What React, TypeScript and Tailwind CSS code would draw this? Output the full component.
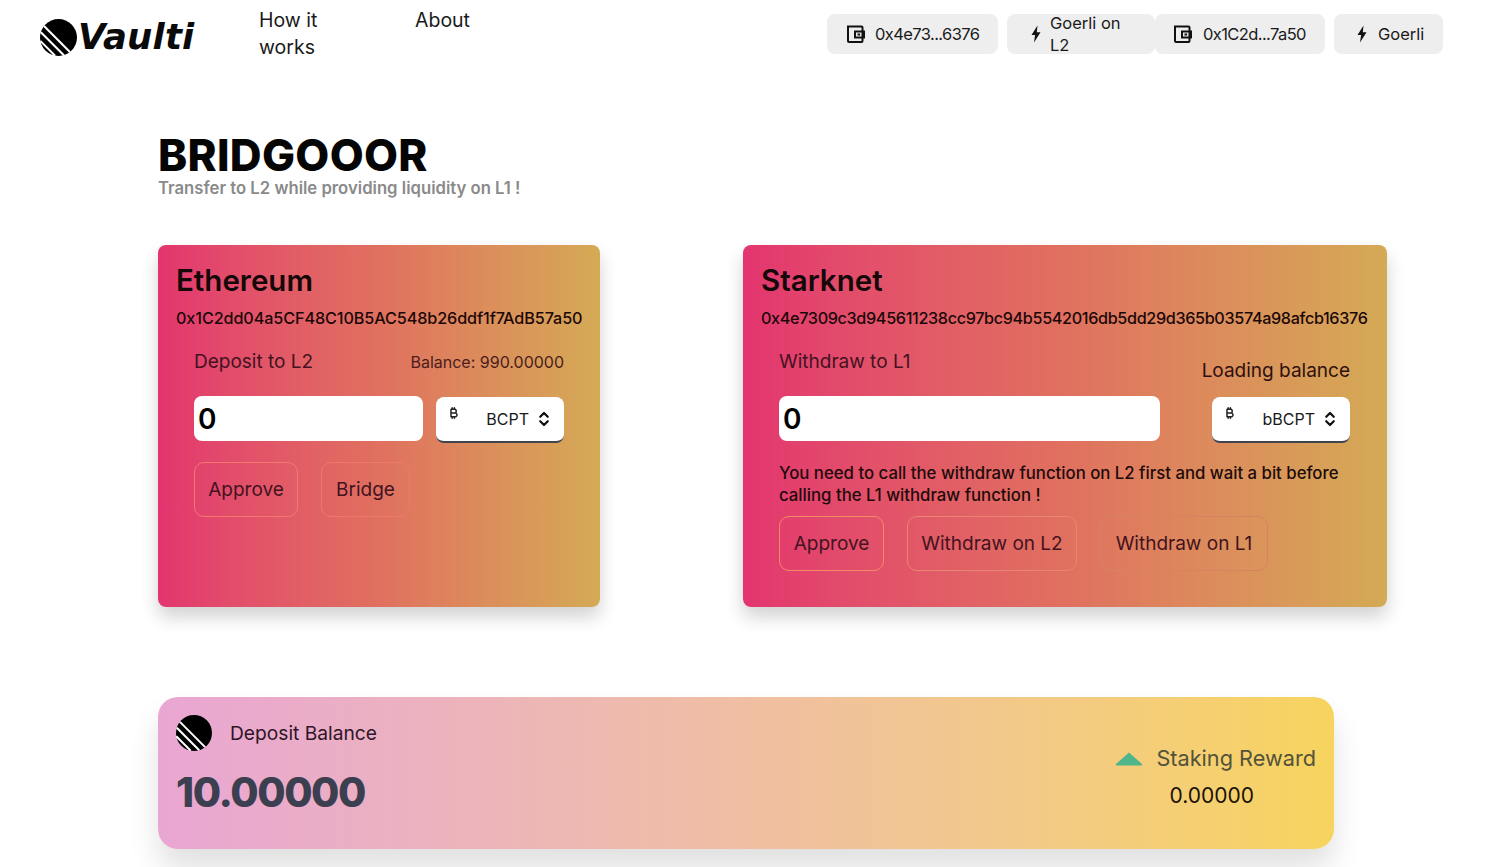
import React from 'react';
import { ChevronsUpDown } from 'lucide-react';
import { FaBitcoinSign } from 'react-icons/fa6';

const LogoMark = ({ size }: { size: number }) => (
  <svg width={size} height={size} viewBox="0 0 36 36" className="shrink-0">
    <circle cx="18" cy="18" r="18" fill="#000" />
    <g stroke="#fff" strokeWidth="2" fill="none">
      <line x1="3.9" y1="6.9" x2="29.1" y2="32.1" />
      <line x1="0.8" y1="12.8" x2="23.2" y2="35.2" />
      <line x1="0.3" y1="21.3" x2="14.7" y2="35.7" />
    </g>
  </svg>
);

const WalletIcon = () => (
  <svg width="20" height="20" viewBox="0 0 20 20" fill="none" stroke="#111" strokeWidth="2" className="shrink-0">
    <path d="M2 2.5h13.5a1 1 0 0 1 1 1V17a1 1 0 0 1-1 1H3a1 1 0 0 1-1-1V2.5z" />
    <path d="M9 7.5h9v6H9z" />
    <rect x="11.5" y="9.5" width="2.6" height="2" fill="#111" stroke="none" />
  </svg>
);

const BoltIcon = () => (
  <svg width="12" height="18" viewBox="0 0 12 18" fill="#111" className="shrink-0">
    <path d="M7.5 0.5 1.5 10h3.6L4 17.5 10.5 7.2H6.8L7.5 0.5z" />
  </svg>
);

const PillButton = ({ className, children }: { className: string; children: React.ReactNode }) => (
  <div className={`flex h-10 items-center rounded-lg bg-[#eeeeee] text-[16.5px] leading-[22px] text-[#1a1a1a] ${className}`}>
    {children}
  </div>
);

const TokenSelect = ({ label, className }: { label: string; className: string }) => (
  <div className={`relative flex h-[46px] shrink-0 items-center justify-end rounded-lg border-b-2 border-[#3f4450] bg-white pr-[11px] text-[16px] text-[#1a1a1a] ${className}`}>
    <FaBitcoinSign className="absolute left-[12px] top-[10px] text-[12px] text-[#222]" />
    <span>{label}</span>
    <ChevronsUpDown className="ml-[6px] text-[#111]" size={18} strokeWidth={3} />
  </div>
);

const ActionButton = ({ className, children }: { className: string; children: React.ReactNode }) => (
  <button className={`flex h-[55px] items-center justify-center rounded-[10px] border pt-[2px] text-[19px] text-[#43131f] ${className}`}>
    {children}
  </button>
);

export default function App() {
  return (
    <div className="h-[867px] overflow-hidden bg-white font-['Inter',sans-serif] text-black">
      {/* ヘッダー */}
      <header className="flex h-[68px] items-start">
        <div className="ml-10 mt-4 flex w-[219px] items-center">
          <LogoMark size={37} />
          <span className="ml-[1px] font-['DejaVu_Sans',sans-serif] text-[35.5px] font-bold italic leading-[42px] tracking-[0.2px] text-[#0a0a0a]">Vaulti</span>
        </div>
        <nav className="mt-[7px] flex text-[19.5px] leading-[27px] text-[#1a1a1a]">
          <a className="w-[156px] pr-[50px]">How it works</a>
          <a>About</a>
        </nav>
        <div className="ml-auto mr-[57px] mt-[14px] flex">
          <PillButton className="mr-[9px] w-[171px] pl-[19px]">
            <WalletIcon />
            <span className="ml-[9px] tracking-[-0.6px]">0x4e73...6376</span>
          </PillButton>
          <PillButton className="w-[148px] pl-[23px]">
            <BoltIcon />
            <span className="ml-[8px] w-[90px]">Goerli on L2</span>
          </PillButton>
          <PillButton className="mr-[9px] w-[170px] pl-[18px]">
            <WalletIcon />
            <span className="ml-[10px] tracking-[-0.6px]">0x1C2d...7a50</span>
          </PillButton>
          <PillButton className="w-[109px] pl-[22px]">
            <BoltIcon />
            <span className="ml-[10px]">Goerli</span>
          </PillButton>
        </div>
      </header>

      <main className="pl-[158px]">
        <h1 className="mt-[65px] text-[44px] font-extrabold leading-[44px] tracking-[0.3px] text-[#050505]">BRIDGOOOR</h1>
        <p className="mt-[1px] text-[16.7px] font-semibold leading-5 text-[#8a8a8a]">Transfer to L2 while providing liquidity on L1 !</p>

        <div className="mt-[47px] flex gap-[143px]">
          {/* Ethereum */}
          <section className="h-[362px] w-[442px] rounded-lg bg-gradient-to-r from-[#e3346f] via-[#e0705f] to-[#d4aa55] px-[18px] pt-[16px] shadow-[0_10px_18px_rgba(0,0,0,0.18)]">
            <h2 className="text-[29.5px] font-semibold leading-[38px] text-[#140808]">Ethereum</h2>
            <p className="mt-[9px] text-[16.2px] font-medium leading-[20px] tracking-[-0.1px] text-[#1c0808]">0x1C2dd04a5CF48C10B5AC548b26ddf1f7AdB57a50</p>
            <div className="ml-[18px] mr-[18px]">
              <div className="mt-[20px] flex items-center justify-between">
                <span className="text-[19px] leading-[27px] text-[#43131f]">Deposit to L2</span>
                <span className="text-[16px] text-[#4a1c1c]">Balance: 990.00000</span>
              </div>
              <div className="mt-[21px] flex items-start justify-between">
                <div className="flex h-[45px] w-[229px] items-center rounded-lg bg-white pl-1 text-[28px] font-semibold text-black">0</div>
                <TokenSelect label="BCPT" className="mt-[1px] w-[128px]" />
              </div>
              <div className="mt-[19px] flex gap-[23px]">
                <ActionButton className="w-[104px] border-[#f5786e]">Approve</ActionButton>
                <ActionButton className="w-[89px] border-[#ec7a6c]">Bridge</ActionButton>
              </div>
            </div>
          </section>

          {/* Starknet */}
          <section className="h-[362px] w-[644px] rounded-lg bg-gradient-to-r from-[#e3346f] via-[#e0705f] to-[#d4aa55] px-[18px] pt-[16px] shadow-[0_10px_18px_rgba(0,0,0,0.18)]">
            <h2 className="text-[29.5px] font-semibold leading-[38px] text-[#140808]">Starknet</h2>
            <p className="mt-[9px] text-[16.2px] font-medium leading-[20px] tracking-[-0.35px] text-[#1c0808]">0x4e7309c3d945611238cc97bc94b5542016db5dd29d365b03574a98afcb16376</p>
            <div className="ml-[18px] mr-[19px]">
              <div className="mt-[20px] flex items-start justify-between">
                <span className="text-[19px] leading-[27px] text-[#43131f]">Withdraw to L1</span>
                <span className="mt-[9px] text-[19px] leading-[27px] text-[#2e1010]">Loading balance</span>
              </div>
              <div className="mt-[12px] flex items-start justify-between">
                <div className="flex h-[45px] w-[381px] items-center rounded-lg bg-white pl-1 text-[28px] font-semibold text-black">0</div>
                <TokenSelect label="bBCPT" className="mt-[1px] w-[138px]" />
              </div>
              <p className="mt-[19px] text-[16.75px] font-medium leading-[22px] text-[#200a0a]">
                You need to call the withdraw function on L2 first and wait a bit before calling the L1 withdraw function !
              </p>
              <div className="mt-[10px] flex gap-[23px]">
                <ActionButton className="w-[105px] border-[#f58a66]">Approve</ActionButton>
                <ActionButton className="w-[170px] border-[#e98570]">Withdraw on L2</ActionButton>
                <ActionButton className="w-[168px] border-[#d98262]">Withdraw on L1</ActionButton>
              </div>
            </div>
          </section>
        </div>

        {/* Deposit Balance */}
        <section className="mt-[90px] flex h-[152px] w-[1176px] justify-between rounded-[20px] bg-gradient-to-r from-[#e9a6d3] to-[#f7d45e] pl-[18px] pr-[18px] shadow-[0_20px_30px_rgba(0,0,0,0.12)]">
          <div className="pt-[18px]">
            <div className="flex items-center">
              <LogoMark size={36} />
              <span className="ml-[18px] text-[19.2px] text-[#2e1528]">Deposit Balance</span>
            </div>
            <div className="mt-[14px] text-[41px] font-extrabold leading-[54px] tracking-[-1.4px] text-[#3b3f50]">10.00000</div>
          </div>
          <div className="flex flex-col pt-[46px]">
            <div className="flex items-center">
              <svg width="28" height="15" viewBox="0 0 28 15" className="shrink-0" fill="#4fb68c">
                <path d="M14 1.5 27 13a.8.8 0 0 1-.6 1.4H1.6A.8.8 0 0 1 1 13L14 1.5z" />
              </svg>
              <span className="ml-[13px] text-[21.7px] leading-[30px] text-[#53523a]">Staking Reward</span>
            </div>
            <div className="mt-[8px] pl-[54px] text-[21px] leading-[30px] text-[#1a1208]">0.00000</div>
          </div>
        </section>
      </main>
    </div>
  );
}
